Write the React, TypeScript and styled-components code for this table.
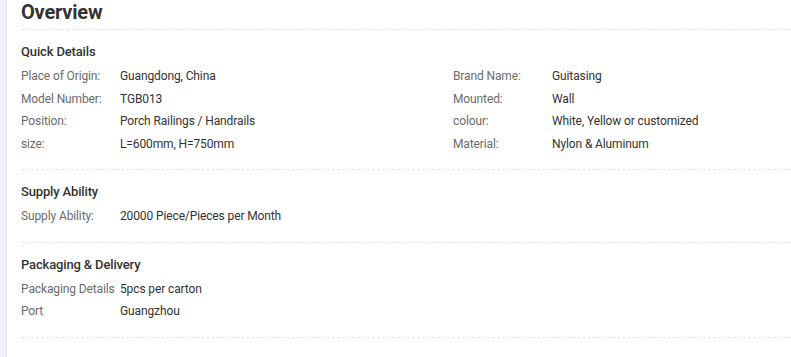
import { createGlobalStyle } from "styled-components";
import styled from "styled-components";

const GlobalStyle = createGlobalStyle`
  html, body {
    margin: 0;
    padding: 0;
    background: #ffffff;
    overflow: hidden;
  }
  body {
    font-family: Roboto, "Liberation Sans", Arial, sans-serif;
    -webkit-font-smoothing: antialiased;
  }
`;

const Page = styled.div`
  display: flex;
  min-height: 357px;
`;

const SideRail = styled.div`
  width: 6px;
  flex-shrink: 0;
  background: #f0f2f7;
  border-right: 1px solid #e4e7ee;
`;

const Panel = styled.div`
  flex: 1;
  min-width: 0;
  padding-left: 14px;
`;

const Title = styled.h2`
  margin: 0;
  font-size: 20px;
  line-height: 24px;
  font-weight: 700;
  letter-spacing: -0.2px;
  color: #333333;
  padding-bottom: 5px;
  border-bottom: 1px dashed #e3e3e3;
`;

const Section = styled.section`
  padding: 12px 0 14px;
  border-bottom: 1px dashed #e3e3e3;
`;

const SectionTitle = styled.h3`
  margin: 0 0 3px;
  font-size: 13px;
  line-height: 20px;
  font-weight: 500;
  letter-spacing: -0.15px;
  color: #333333;
`;

const Grid = styled.div<{ $cols: number }>`
  display: grid;
  grid-template-columns: ${(p) => (p.$cols === 2 ? "432px 1fr" : "1fr")};
`;

const Row = styled.div`
  display: flex;
  font-size: 12px;
  line-height: 22.5px;
  letter-spacing: -0.12px;
`;

const Label = styled.span`
  width: 99px;
  flex-shrink: 0;
  color: #6b6b6b;
  white-space: nowrap;
`;

const Value = styled.span`
  color: #333333;
  white-space: nowrap;
`;

type Item = [string, string];

const sections: { title: string; cols: number; items: Item[] }[] = [
  {
    title: "Quick Details",
    cols: 2,
    items: [
      ["Place of Origin:", "Guangdong, China"],
      ["Brand Name:", "Guitasing"],
      ["Model Number:", "TGB013"],
      ["Mounted:", "Wall"],
      ["Position:", "Porch Railings / Handrails"],
      ["colour:", "White, Yellow or customized"],
      ["size:", "L=600mm, H=750mm"],
      ["Material:", "Nylon & Aluminum"],
    ],
  },
  {
    title: "Supply Ability",
    cols: 1,
    items: [["Supply Ability:", "20000 Piece/Pieces per Month"]],
  },
  {
    title: "Packaging & Delivery",
    cols: 1,
    items: [
      ["Packaging Details", "5pcs per carton"],
      ["Port", "Guangzhou"],
    ],
  },
];

export default function App() {
  return (
    <>
      <GlobalStyle />
      <Page>
        <SideRail />
        <Panel>
          <Title>Overview</Title>
          {sections.map((s) => (
            <Section key={s.title}>
              <SectionTitle>{s.title}</SectionTitle>
              <Grid $cols={s.cols}>
                {s.items.map(([k, v]) => (
                  <Row key={k}>
                    <Label>{k}</Label>
                    <Value>{v}</Value>
                  </Row>
                ))}
              </Grid>
            </Section>
          ))}
        </Panel>
      </Page>
    </>
  );
}
